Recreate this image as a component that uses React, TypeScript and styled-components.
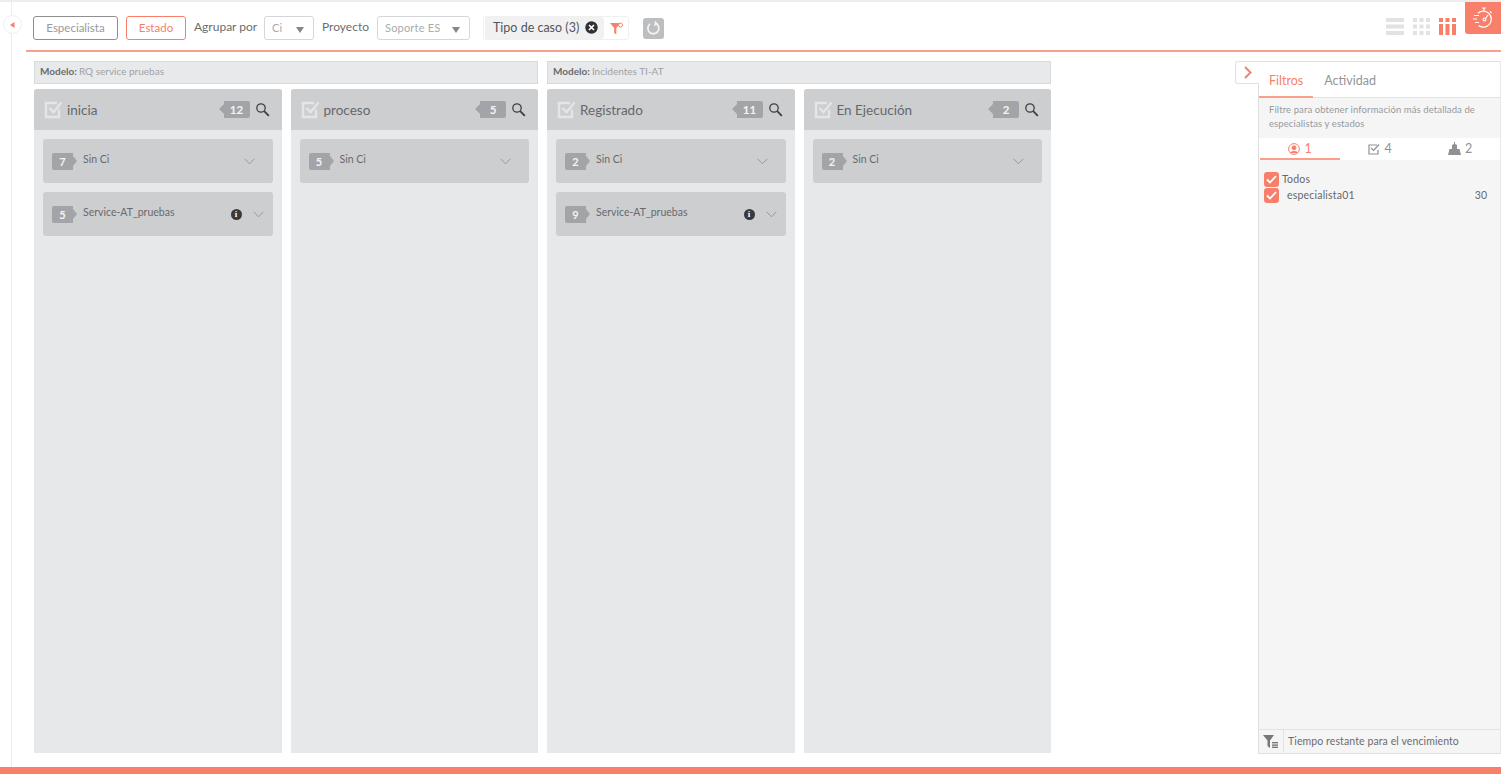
import React from "react";
import styled, { createGlobalStyle } from "styled-components";

const Global = createGlobalStyle`
  html, body { margin: 0; padding: 0; background: #fff; }
  body { font-family: "Lato", "Liberation Sans", sans-serif; color: #6f7072; }
  * { box-sizing: border-box; }
`;

const coral = "#f8806a";
const coralLine = "#fa9f8e";

const Page = styled.div`
  width: 1501px; height: 774px; overflow: hidden; display: flex; flex-direction: column;
  border-top: 2px solid #ededed;
`;
const Shell = styled.div`flex: 1; min-height: 0; display: flex;`;
const Rail = styled.div`
  width: 26px; flex: none; position: relative;
  &::before { content: ""; position: absolute; left: 11px; top: 0; bottom: 0; width: 1px; background: #ececec; }
`;
const RailButton = styled.div`
  position: absolute; left: 3px; top: 13px; width: 19px; height: 19px; border-radius: 50%;
  background: #fff; border: 1px solid #efefef; display: flex; align-items: center; justify-content: center;
`;
const Main = styled.div`flex: 1; min-width: 0; display: flex; flex-direction: column;`;
const Toolbar = styled.div`
  height: 50px; flex: none; display: flex; align-items: flex-start; padding: 14px 0 0 7px;
  box-shadow: inset 0 -2px 0 ${coralLine};
`;
const ToggleButton = styled.div<{ $on?: boolean; $w: number }>`
  width: ${p => p.$w}px; height: 24px; border-radius: 3px; margin-right: 8px; padding-bottom: 2px;
  border: 1px solid ${p => (p.$on ? coral : "#8f9092")};
  color: ${p => (p.$on ? coral : "#98999b")};
  font-size: 11.5px; display: flex; align-items: center; justify-content: center;
`;
const Label = styled.span<{ $w: number }>`
  font-size: 12px; color: #6b6c6e; width: ${p => p.$w}px; flex: none; line-height: 21px;
`;
const Select = styled.div<{ $w: number }>`
  width: ${p => p.$w}px; height: 24px; border: 1px solid #d5d6d8; border-radius: 3px; margin-right: 8px;
  font-size: 11px; color: #aaabad; display: flex; align-items: center; justify-content: space-between;
  padding: 0 9px 2px 7px; letter-spacing: .2px;
  &::after { content: ""; border: 4px solid transparent; border-top: 6px solid #85868a; border-bottom: 0; margin-top: 5px; }
`;
const FilterChip = styled.div`
  margin-left: 5px; width: 146px; height: 24px; border: 1px solid #f0f0f0; border-radius: 3px; display: flex;
`;
const ChipBody = styled.div`
  width: 119px; margin-left: 1px; background: #f1f1f2; border-radius: 3px; display: flex; align-items: center;
  padding: 0 0 2px 8px; gap: 6px; font-size: 12.5px; color: #55565a; white-space: nowrap;
`;
const ChipFilter = styled.div`flex: 1; display: flex; align-items: center; justify-content: center;`;
const Reload = styled.div`
  width: 21px; height: 21px; margin: 2px 0 0 14px; border-radius: 3px; background: #bdbec0;
  display: flex; align-items: center; justify-content: center;
`;
const ViewIcons = styled.div`
  display: flex; gap: 9px; margin: 2px 0 0 auto; padding-right: 9px;
`;
const Timer = styled.div`
  width: 36px; height: 32px; margin-top: -14px; background: ${coral}; border-bottom-left-radius: 3px;
  display: flex; align-items: center; justify-content: center;
`;
const Content = styled.div`flex: 1; min-height: 0; display: flex; position: relative;`;
const Board = styled.div`flex: 1; display: flex; gap: 9px; padding: 9px 0 14px 8px;`;
const Group = styled.div`width: 504px; display: flex; flex-direction: column; gap: 5px;`;
const ModelBar = styled.div`
  height: 23px; background: #e8e9eb; border: 1px solid #d8d9db; font-size: 10px; color: #a0a1a3;
  display: flex; align-items: center; padding: 0 0 3px 5px; gap: 2px;
  b { color: #6b6c6e; font-weight: 700; }
`;
const Columns = styled.div`flex: 1; display: flex; gap: 9px;`;
const Column = styled.div`width: 248px; background: #e7e8ea; border-radius: 3px 3px 0 0; display: flex; flex-direction: column;`;
const ColumnHead = styled.div`
  height: 41px; flex: none; background: #cdced0; border-radius: 3px 3px 0 0; display: flex; align-items: center; padding: 0 12px 0 10px;
`;
const ColumnTitle = styled.span`font-size: 13.5px; color: #66676a; margin-left: 4px; flex: 1;`;
const CountTag = styled.span`
  position: relative; width: 26px; height: 17px; margin-right: 5px; background: #a3a4a7; border-radius: 0 2px 2px 0; color: #f4f4f4;
  font-size: 11.5px; font-weight: 700; display: flex; align-items: center; justify-content: center;
  &::before { content: ""; position: absolute; left: -5px; top: 3px; border: 5.5px solid transparent; border-left: 0; border-right: 5px solid #a3a4a7; }
`;
const Cards = styled.div`padding: 9px; display: flex; flex-direction: column; gap: 9px;`;
const Card = styled.div`
  height: 44px; background: #cdced0; border-radius: 3px; display: flex; align-items: center; padding: 0 9px;
`;
const CardBadge = styled.span`
  position: relative; width: 21px; height: 17px; background: #a3a4a7; color: #f4f4f4; font-size: 11px; font-weight: 700; border-radius: 2px 0 0 2px;
  display: flex; align-items: center; justify-content: center;
  &::after { content: ""; position: absolute; right: -4px; top: 3px; border: 5.5px solid transparent; border-right: 0; border-left: 4px solid #a3a4a7; }
`;
const CardTitle = styled.span`flex: 1; margin: -5px 0 0 10px; font-size: 10.5px; color: #68696c;`;
const Chevron = styled.svg<{ $inset?: boolean }>`margin-right: ${p => (p.$inset ? "9px" : "0")};`;
const InfoDot = styled.span`
  width: 11px; height: 11px; border-radius: 50%; background: #38393c; color: #fff; font: 700 9px/11px "Liberation Serif", serif;
  text-align: center; margin-right: 11px;
`;
const SideToggle = styled.div`
  position: absolute; left: 1209px; top: 9px; width: 24px; height: 23px; background: #fff; border: 1px solid #e0e1e3; border-right: 0;
  border-radius: 3px 0 0 3px; display: flex; align-items: center; justify-content: center;
`;
const Panel = styled.aside`
  width: 243px; flex: none; margin: 9px 0 13px auto; background: #f5f5f6; border: 1px solid #dedfe1; border-right-color: #e9e9ea;
  display: flex; flex-direction: column;
`;
const Tabs = styled.div`
  height: 36px; flex: none; background: #fff; box-shadow: inset 0 -1px 0 #e2e3e5; display: flex;
`;
const Tab = styled.div<{ $on?: boolean }>`
  height: 36px; padding: 11px 10px 0 10px; font-size: 12.5px; margin-right: ${p => (p.$on ? "1px" : 0)};
  color: ${p => (p.$on ? coral : "#939497")};
  box-shadow: ${p => (p.$on ? `inset 0 -2px 0 ${coralLine}` : "none")};
`;
const Hint = styled.p`
  margin: 0; height: 40px; padding: 5px 10px 0; font-size: 9.5px; line-height: 14px; color: #98999c; letter-spacing: .1px;
`;
const SubTabs = styled.div`height: 22px; flex: none; background: #fff; display: flex;`;
const SubTab = styled.div<{ $on?: boolean }>`
  flex: 1; display: flex; align-items: center; justify-content: center; gap: 4px; font-size: 12.5px; padding-bottom: 1px;
  color: ${p => (p.$on ? coral : "#909194")};
  box-shadow: ${p => (p.$on ? `inset 0 -2px 0 ${coralLine}` : "none")};
  margin-left: ${p => (p.$on ? "1px" : 0)};
`;
const CheckList = styled.div`flex: 1; padding: 11px 13px 0 5px;`;
const CheckRow = styled.div`height: 16px; display: flex; align-items: center; font-size: 10.5px; color: #66676a;`;
const CheckBox = styled.span`
  width: 15px; height: 15px; flex: none; border-radius: 3px; background: ${coral}; display: flex; align-items: center; justify-content: center; margin-right: 3px;
`;
const RowName = styled.span<{ $indent?: boolean }>`flex: 1; margin-left: ${p => (p.$indent ? "5px" : 0)}; margin-top: -1px; letter-spacing: .2px;`;
const PanelFoot = styled.div`
  height: 24px; flex: none; border-top: 1px solid #e2e3e5; display: flex; align-items: center; font-size: 10.5px; color: #6b6c6e; letter-spacing: .1px; padding-bottom: 1px;
`;
const FootIcon = styled.div`
  width: 25px; height: 100%; border-right: 1px solid #e2e3e5; margin-right: 4px; display: flex; align-items: center; justify-content: center;
`;
const BottomBar = styled.div`height: 7px; flex: none; background: ${coral};`;

const CheckSquare = () => (
  <svg width="19" height="19" viewBox="0 0 19 19" fill="none">
    <path d="M15 9.5V17H2V3h11" stroke="#e4e5e7" strokeWidth="2.4" />
    <path d="M5.5 8l4 4.2L17.5 2.5" stroke="#e4e5e7" strokeWidth="2.4" />
  </svg>
);
const Search = () => (
  <svg width="15" height="15" viewBox="0 0 15 15" fill="none" stroke="#3f4043">
    <circle cx="6" cy="6" r="4.2" strokeWidth="1.3" />
    <path d="M9.2 9.2l4.6 4.6" strokeWidth="1.9" />
  </svg>
);

type C = { title: string; count: number; rows: [number, string][] };
const groups: { model: string; cols: C[] }[] = [
  {
    model: "RQ service pruebas",
    cols: [
      { title: "inicia", count: 12, rows: [[7, "Sin Ci"], [5, "Service-AT_pruebas"]] },
      { title: "proceso", count: 5, rows: [[5, "Sin Ci"]] },
    ],
  },
  {
    model: "Incidentes TI-AT",
    cols: [
      { title: "Registrado", count: 11, rows: [[2, "Sin Ci"], [9, "Service-AT_pruebas"]] },
      { title: "En Ejecución", count: 2, rows: [[2, "Sin Ci"]] },
    ],
  },
];

const Tick = () => (
  <svg width="11" height="9" viewBox="0 0 11 9" fill="none" stroke="#fff" strokeWidth="1.8"><path d="M1 4.5l3 3L10 1.2" /></svg>
);

export default function App() {
  return (
    <Page>
      <Global />
      <Shell>
        <Rail>
          <RailButton>
            <svg width="5" height="6" viewBox="0 0 5 6" fill={coral}><path d="M0 3l4.5-3v6z" /></svg>
          </RailButton>
        </Rail>
        <Main>
          <Toolbar>
            <ToggleButton $w={85}>Especialista</ToggleButton>
            <ToggleButton $w={60} $on>Estado</ToggleButton>
            <Label $w={70}>Agrupar por</Label>
            <Select $w={50}>Ci</Select>
            <Label $w={55}>Proyecto</Label>
            <Select $w={93}>Soporte ES</Select>
            <FilterChip>
              <ChipBody>
                Tipo de caso (3)
                <svg width="13" height="13" viewBox="0 0 13 13"><circle cx="6.5" cy="6.5" r="6.2" fill="#2f3033" /><path d="M4 4l5 5M9 4l-5 5" stroke="#fff" strokeWidth="1.7" /></svg>
              </ChipBody>
              <ChipFilter>
                <svg width="13" height="13" viewBox="0 0 13 13"><path d="M0 1h10L6.3 6v6.5L4.2 11V6z" fill={coral} /><circle cx="10.5" cy="3" r="2" fill="#fff" stroke={coral} /></svg>
              </ChipFilter>
            </FilterChip>
            <Reload>
              <svg width="15" height="15" viewBox="0 0 15 15" fill="none" stroke="#f2f2f3" strokeWidth="1.8">
                <path d="M10.6 2.8A5.5 5.5 0 1 1 4 2.9" />
                <path d="M9 .3l2.4 2.8-3.2 1.4" strokeWidth="1.2" fill="#f2f2f3" />
              </svg>
            </Reload>
            <ViewIcons>
              <svg width="18" height="17" viewBox="0 0 18 17" fill="#e2e2e3"><rect width="18" height="4" /><rect y="6.5" width="18" height="4" /><rect y="13" width="18" height="4" /></svg>
              <svg width="17" height="17" viewBox="0 0 17 17" fill="#e2e2e3">
                {[0, 6.5, 13].map(y => [0, 6.5, 13].map(x => <rect key={`${x}-${y}`} x={x} y={y} width="4" height="4" />))}
              </svg>
              <svg width="17" height="17" viewBox="0 0 17 17" fill={coral}>
                {[0, 6.5, 13].map(x => <React.Fragment key={x}><rect x={x} width="4" height="4" /><rect x={x} y="6" width="4" height="11" /></React.Fragment>)}
              </svg>
            </ViewIcons>
            <Timer>
              <svg width="22" height="22" viewBox="0 0 22 22" fill="none" stroke="#fff" strokeWidth="1.2">
                <path d="M6 6.2A8 8 0 1 1 6.5 18.6" />
                <path d="M10 1h4M12 1v3M18 4.5l1.5 1.5" />
                <path d="M2 8.5h5M1 12h4M3 15.5h4" />
                <circle cx="12.5" cy="12.5" r="1.4" />
                <path d="M13.5 11.5l2.5-3.5" />
              </svg>
            </Timer>
          </Toolbar>
          <Content>
            <Board>
              {groups.map(g => (
                <Group key={g.model}>
                  <ModelBar><b>Modelo:</b> {g.model}</ModelBar>
                  <Columns>
                    {g.cols.map(c => (
                      <Column key={c.title}>
                        <ColumnHead>
                          <CheckSquare />
                          <ColumnTitle>{c.title}</ColumnTitle>
                          <CountTag>{c.count}</CountTag>
                          <Search />
                        </ColumnHead>
                        <Cards>
                          {c.rows.map(([n, t]) => (
                            <Card key={t}>
                              <CardBadge>{n}</CardBadge>
                              <CardTitle>{t}</CardTitle>
                              {t !== "Sin Ci" && <InfoDot>i</InfoDot>}
                              <Chevron $inset={t === "Sin Ci"} width="11" height="7" viewBox="0 0 11 7" fill="none" stroke="#97989b" strokeWidth="1">
                                <path d="M.7.8l4.8 5 4.8-5" />
                              </Chevron>
                            </Card>
                          ))}
                        </Cards>
                      </Column>
                    ))}
                  </Columns>
                </Group>
              ))}
            </Board>
            <SideToggle>
              <svg width="8" height="13" viewBox="0 0 8 13" fill="none" stroke={coral} strokeWidth="2"><path d="M1 1l5.5 5.5L1 12" /></svg>
            </SideToggle>
            <Panel>
              <Tabs>
                <Tab $on>Filtros</Tab>
                <Tab>Actividad</Tab>
              </Tabs>
              <Hint>Filtre para obtener información más detallada de especialistas y estados</Hint>
              <SubTabs>
                <SubTab $on>
                  <svg width="12" height="12" viewBox="0 0 12 12" fill="none" stroke={coral}>
                    <circle cx="6" cy="6" r="5.4" />
                    <circle cx="6" cy="4.8" r="2" fill={coral} />
                    <path d="M2.5 10c.5-2 6.5-2 7 0" fill={coral} />
                  </svg>
                  1
                </SubTab>
                <SubTab>
                  <svg width="12" height="12" viewBox="0 0 12 12" fill="none" stroke="#909194" strokeWidth="1.2">
                    <path d="M10 7v4H1V2h8" />
                    <path d="M3 5l2.5 2.5L11 1.5" />
                  </svg>
                  4
                </SubTab>
                <SubTab>
                  <svg width="13" height="13" viewBox="0 0 13 13" fill="#909194"><path d="M0 13l1.5-6H4V3l2-1V0h1v2l2 1v4h2.5L13 13z" /></svg>
                  2
                </SubTab>
              </SubTabs>
              <CheckList>
                <CheckRow><CheckBox><Tick /></CheckBox><RowName>Todos</RowName></CheckRow>
                <CheckRow><CheckBox><Tick /></CheckBox><RowName $indent>especialista01</RowName>30</CheckRow>
              </CheckList>
              <PanelFoot>
                <FootIcon>
                  <svg width="16" height="13" viewBox="0 0 16 13" fill="#77787b"><path d="M0 0h11L7 5.5V13L4.5 11V5.5z" /><rect x="9" y="7" width="6" height="1.4" /><rect x="9" y="9.4" width="6" height="1.4" /><rect x="9" y="11.6" width="6" height="1.4" /></svg>
                </FootIcon>
                Tiempo restante para el vencimiento
              </PanelFoot>
            </Panel>
          </Content>
        </Main>
      </Shell>
      <BottomBar />
    </Page>
  );
}
